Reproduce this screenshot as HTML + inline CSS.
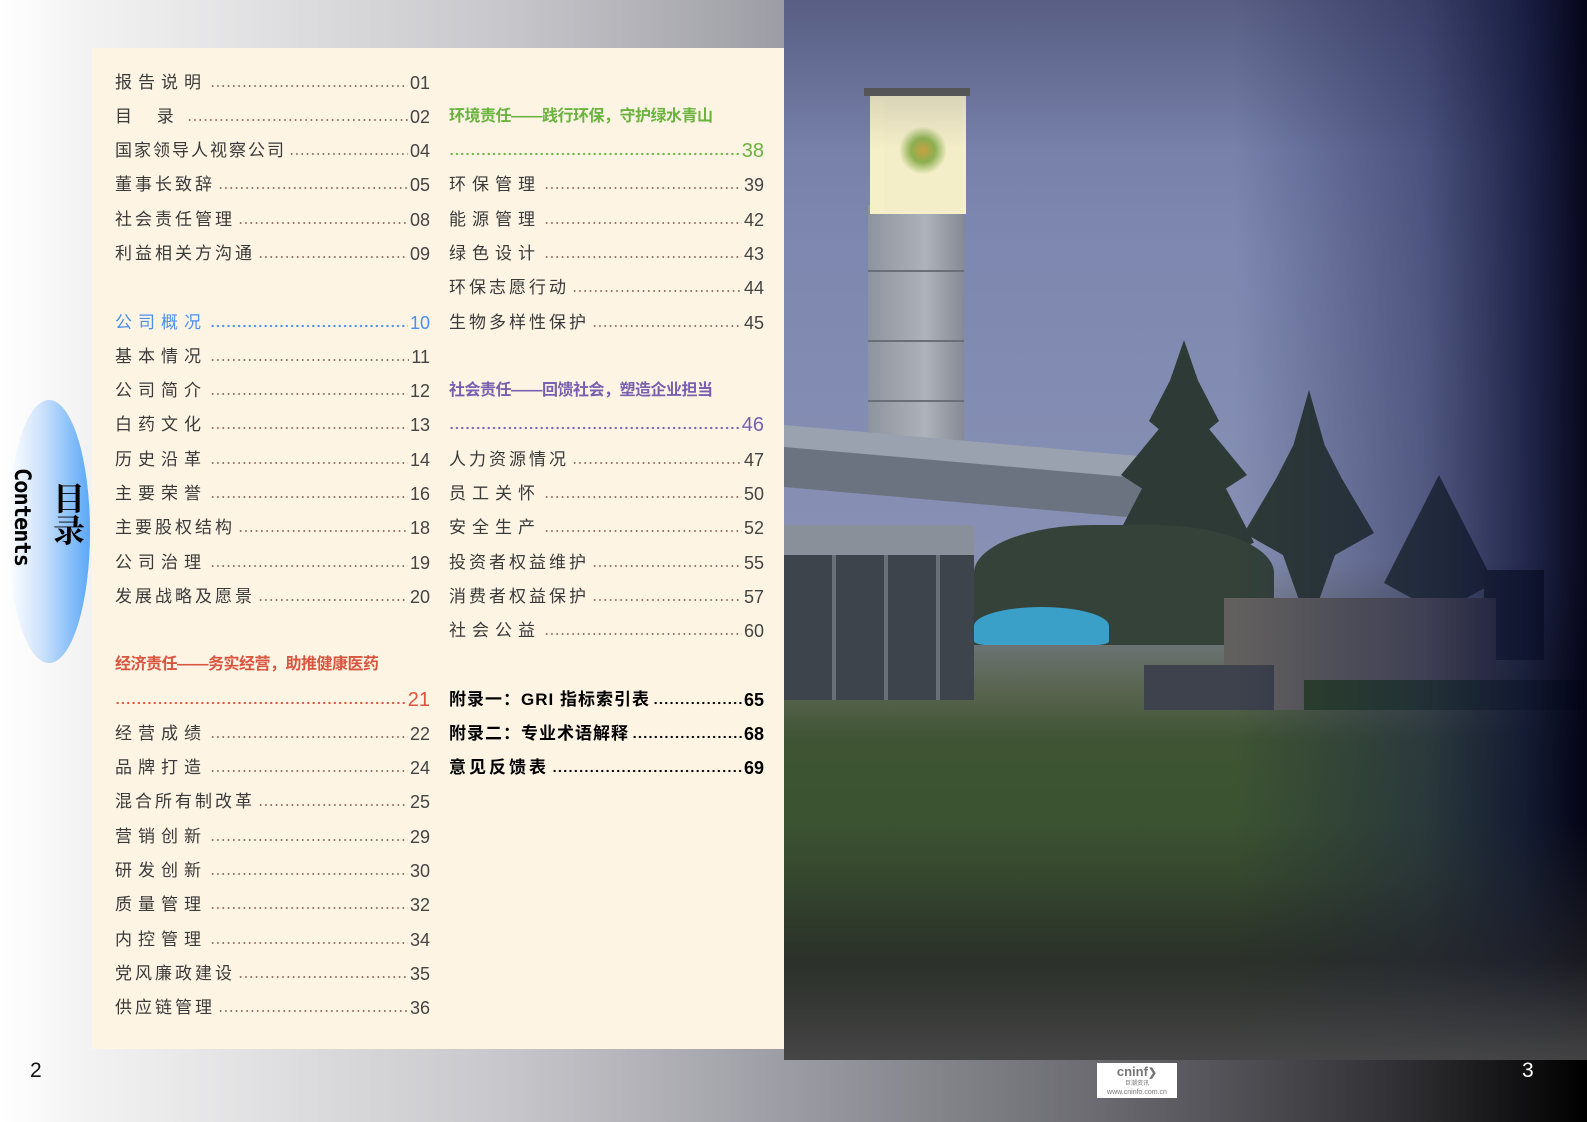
<!DOCTYPE html>
<html><head><meta charset="utf-8">
<style>
*{margin:0;padding:0;box-sizing:border-box}
body{width:1587px;height:1122px;position:relative;overflow:hidden;font-family:"Liberation Sans","Noto Sans CJK SC",sans-serif;
background:linear-gradient(90deg,#fff 0,#f2f2f2 90px,#c8c8cc 500px,#9a9aa2 800px,#6a6a70 1100px,#303034 1400px,#000 1587px);}
.photo{position:absolute;left:784px;top:0;width:803px;height:1060px;overflow:hidden;
background:linear-gradient(180deg,#6c76a0 0,#7e88b0 250px,#8890b4 560px,#5a6450 690px,#3e5433 740px,#3a5230 880px,#2a3628 1000px,#3a3a3a 1060px);}
.vig{position:absolute;inset:0;background:linear-gradient(90deg,rgba(0,0,0,0) 0,rgba(0,0,0,0) 450px,rgba(20,25,70,.45) 640px,rgba(10,14,50,.8) 740px,rgba(0,0,20,.95) 803px);}
.vig2{position:absolute;inset:0;background:linear-gradient(180deg,rgba(0,0,0,0) 0,rgba(0,0,0,0) 820px,rgba(40,40,40,.6) 960px,rgba(70,70,70,.95) 1060px);}
.vig3{position:absolute;inset:0;background:linear-gradient(180deg,rgba(60,60,90,.4) 0,rgba(0,0,0,0) 150px);}
.panel{position:absolute;left:92px;top:48px;width:692px;height:1001px;background:#fdf4e4}
.r{position:absolute;width:315px;height:22px;display:flex;align-items:flex-end;font-size:17px;color:#3a3a3a;line-height:22px;white-space:nowrap}
.r .l{letter-spacing:3px}
.r .d{flex:1;height:4px;margin:0 2px 6px 3px;background-image:radial-gradient(circle,#8a6a5a 0.8px,transparent 1.1px);background-size:5.3px 4px;background-repeat:repeat-x}
.r .n{font-size:18px;color:#444}
.w .l{letter-spacing:6px}
.blue,.blue .n{color:#4a8ef0}.blue .d{background-image:radial-gradient(circle,#4a8ef0 1px,transparent 1.3px)}
.red,.red .n{color:#d9553f}.red .d{background-image:radial-gradient(circle,#d9553f 1px,transparent 1.3px)}
.green,.green .n{color:#6ab33e}.green .d{background-image:radial-gradient(circle,#6ab33e 1px,transparent 1.3px)}
.purple,.purple .n{color:#7a5fb0}.purple .d{background-image:radial-gradient(circle,#7a5fb0 1px,transparent 1.3px)}
.h{font-weight:bold;font-size:16px;letter-spacing:-0.5px}
.b,.b .n{color:#000;font-weight:bold}.b .d{background-image:radial-gradient(circle,#000 1px,transparent 1.3px)}
.b .l{letter-spacing:1px}
.ell{position:absolute;left:8px;top:400px;width:82px;height:263px;border-radius:50%;background:linear-gradient(90deg,#fff 0,#cfe3fb 40%,#5aa8f8 100%)}
.tree{position:absolute;background:#2e3a36}
</style></head><body>
<div class="photo">
 <div style="position:absolute;left:84px;top:205px;width:96px;height:245px;background:linear-gradient(90deg,#8e949e,#aeb2ba 60%,#868a94)"></div>
 <div style="position:absolute;left:84px;top:270px;width:96px;height:2px;background:#6a6e76"></div>
 <div style="position:absolute;left:84px;top:340px;width:96px;height:2px;background:#6a6e76"></div>
 <div style="position:absolute;left:84px;top:400px;width:96px;height:2px;background:#6a6e76"></div>
 <div style="position:absolute;left:80px;top:88px;width:106px;height:8px;background:#5a5a58"></div>
 <div style="position:absolute;left:86px;top:96px;width:96px;height:118px;background:#f6f0c8"></div>
 <div style="position:absolute;left:100px;top:100px;width:78px;height:112px;background:radial-gradient(circle at 50% 45%,#c8a040 0,#8cb050 12px,#f4eec8 24px)"></div>
 <div style="position:absolute;left:0;top:425px;width:435px;height:22px;background:#9aa2b0;transform:skewY(5deg);transform-origin:left top"></div>
 <div style="position:absolute;left:0;top:447px;width:435px;height:40px;background:#6c7380;transform:skewY(5deg);transform-origin:left top"></div>
 <div class="tree" style="left:330px;top:340px;width:140px;height:270px;clip-path:polygon(50% 0,60% 15%,75% 30%,68% 33%,95% 50%,80% 55%,100% 75%,60% 85%,55% 100%,45% 100%,40% 85%,0 75%,20% 55%,5% 50%,32% 33%,25% 30%,40% 15%)"></div>
 <div class="tree" style="left:460px;top:390px;width:130px;height:220px;clip-path:polygon(50% 0,62% 25%,75% 40%,100% 65%,70% 75%,55% 100%,45% 100%,30% 75%,0 65%,25% 40%,38% 25%)"></div>
 <div class="tree" style="left:600px;top:475px;width:110px;height:135px;clip-path:polygon(50% 0,100% 80%,55% 100%,45% 100%,0 80%)"></div>
 <div style="position:absolute;left:190px;top:525px;width:300px;height:120px;background:#34423a;border-radius:40% 40% 0 0"></div>
 <div style="position:absolute;left:700px;top:570px;width:60px;height:90px;background:#2a3630"></div>
 <div style="position:absolute;left:0;top:525px;width:190px;height:30px;background:#8a909a"></div>
 <div style="position:absolute;left:0;top:555px;width:190px;height:145px;background:repeating-linear-gradient(90deg,#3e444c 0,#3e444c 48px,#6a7078 48px,#6a7078 52px)"></div>
 <div style="position:absolute;left:440px;top:598px;width:272px;height:112px;background:#62605e"></div>
 <div style="position:absolute;left:360px;top:665px;width:130px;height:45px;background:#3e424c"></div>
 <div style="position:absolute;left:520px;top:680px;width:280px;height:30px;background:#2e4428"></div>
 <div style="position:absolute;left:190px;top:607px;width:135px;height:38px;background:#3aa0c8;border-radius:50% 50% 10% 10%"></div>
 <div class="vig3"></div><div class="vig"></div><div class="vig2"></div>
</div>
<div class="panel"></div>
<div class="ell"></div>
<div style="position:absolute;left:46px;top:482px;font-size:32px;font-weight:bold;color:#000;line-height:46px;writing-mode:vertical-rl;font-family:'Noto Serif CJK SC','Noto Sans CJK SC',serif">目录</div>
<div style="position:absolute;left:9px;top:468px;font-size:22px;font-weight:bold;color:#000;writing-mode:vertical-rl;font-family:'DejaVu Sans Mono','Liberation Mono',monospace;letter-spacing:-1px">Contents</div>

<div class="r w" style="left:115px;top:72px"><span class="l">报告说明</span><span class="d"></span><span class="n">01</span></div>
<div class="r" style="left:115px;top:106px"><span class="l" style="letter-spacing:10px">目 录</span><span class="d"></span><span class="n">02</span></div>
<div class="r" style="left:115px;top:140px"><span class="l" style="letter-spacing:2px">国家领导人视察公司</span><span class="d"></span><span class="n">04</span></div>
<div class="r" style="left:115px;top:174px"><span class="l">董事长致辞</span><span class="d"></span><span class="n">05</span></div>
<div class="r" style="left:115px;top:209px"><span class="l">社会责任管理</span><span class="d"></span><span class="n">08</span></div>
<div class="r" style="left:115px;top:243px"><span class="l">利益相关方沟通</span><span class="d"></span><span class="n">09</span></div>
<div class="r w blue" style="left:115px;top:312px"><span class="l">公司概况</span><span class="d"></span><span class="n">10</span></div>
<div class="r w" style="left:115px;top:346px"><span class="l">基本情况</span><span class="d"></span><span class="n">11</span></div>
<div class="r w" style="left:115px;top:380px"><span class="l">公司简介</span><span class="d"></span><span class="n">12</span></div>
<div class="r w" style="left:115px;top:414px"><span class="l">白药文化</span><span class="d"></span><span class="n">13</span></div>
<div class="r w" style="left:115px;top:449px"><span class="l">历史沿革</span><span class="d"></span><span class="n">14</span></div>
<div class="r w" style="left:115px;top:483px"><span class="l">主要荣誉</span><span class="d"></span><span class="n">16</span></div>
<div class="r" style="left:115px;top:517px"><span class="l">主要股权结构</span><span class="d"></span><span class="n">18</span></div>
<div class="r w" style="left:115px;top:552px"><span class="l">公司治理</span><span class="d"></span><span class="n">19</span></div>
<div class="r" style="left:115px;top:586px"><span class="l">发展战略及愿景</span><span class="d"></span><span class="n">20</span></div>
<div class="r red" style="left:115px;top:654px"><span class="h">经济责任——务实经营，助推健康医药</span></div>
<div class="r red" style="left:115px;top:689px"><span class="d" style="margin-left:0"></span><span class="n" style="font-size:20px">21</span></div>
<div class="r w" style="left:115px;top:723px"><span class="l">经营成绩</span><span class="d"></span><span class="n">22</span></div>
<div class="r w" style="left:115px;top:757px"><span class="l">品牌打造</span><span class="d"></span><span class="n">24</span></div>
<div class="r" style="left:115px;top:791px"><span class="l">混合所有制改革</span><span class="d"></span><span class="n">25</span></div>
<div class="r w" style="left:115px;top:826px"><span class="l">营销创新</span><span class="d"></span><span class="n">29</span></div>
<div class="r w" style="left:115px;top:860px"><span class="l">研发创新</span><span class="d"></span><span class="n">30</span></div>
<div class="r w" style="left:115px;top:894px"><span class="l">质量管理</span><span class="d"></span><span class="n">32</span></div>
<div class="r w" style="left:115px;top:929px"><span class="l">内控管理</span><span class="d"></span><span class="n">34</span></div>
<div class="r" style="left:115px;top:963px"><span class="l">党风廉政建设</span><span class="d"></span><span class="n">35</span></div>
<div class="r" style="left:115px;top:997px"><span class="l">供应链管理</span><span class="d"></span><span class="n">36</span></div>

<div class="r green" style="left:449px;top:106px"><span class="h">环境责任——践行环保，守护绿水青山</span></div>
<div class="r green" style="left:449px;top:140px"><span class="d" style="margin-left:0"></span><span class="n" style="font-size:20px">38</span></div>
<div class="r w" style="left:449px;top:174px"><span class="l">环保管理</span><span class="d"></span><span class="n">39</span></div>
<div class="r w" style="left:449px;top:209px"><span class="l">能源管理</span><span class="d"></span><span class="n">42</span></div>
<div class="r w" style="left:449px;top:243px"><span class="l">绿色设计</span><span class="d"></span><span class="n">43</span></div>
<div class="r" style="left:449px;top:277px"><span class="l">环保志愿行动</span><span class="d"></span><span class="n">44</span></div>
<div class="r" style="left:449px;top:312px"><span class="l">生物多样性保护</span><span class="d"></span><span class="n">45</span></div>
<div class="r purple" style="left:449px;top:380px"><span class="h">社会责任——回馈社会，塑造企业担当</span></div>
<div class="r purple" style="left:449px;top:414px"><span class="d" style="margin-left:0"></span><span class="n" style="font-size:20px">46</span></div>
<div class="r" style="left:449px;top:449px"><span class="l">人力资源情况</span><span class="d"></span><span class="n">47</span></div>
<div class="r w" style="left:449px;top:483px"><span class="l">员工关怀</span><span class="d"></span><span class="n">50</span></div>
<div class="r w" style="left:449px;top:517px"><span class="l">安全生产</span><span class="d"></span><span class="n">52</span></div>
<div class="r" style="left:449px;top:552px"><span class="l">投资者权益维护</span><span class="d"></span><span class="n">55</span></div>
<div class="r" style="left:449px;top:586px"><span class="l">消费者权益保护</span><span class="d"></span><span class="n">57</span></div>
<div class="r w" style="left:449px;top:620px"><span class="l">社会公益</span><span class="d"></span><span class="n">60</span></div>
<div class="r b" style="left:449px;top:689px"><span class="l">附录一：GRI 指标索引表</span><span class="d"></span><span class="n">65</span></div>
<div class="r b" style="left:449px;top:723px"><span class="l">附录二：专业术语解释</span><span class="d"></span><span class="n">68</span></div>
<div class="r b" style="left:449px;top:757px"><span class="l" style="letter-spacing:3px">意见反馈表</span><span class="d"></span><span class="n">69</span></div>

<div style="position:absolute;left:30px;top:1059px;font-size:21px;color:#111">2</div>
<div style="position:absolute;left:1522px;top:1059px;font-size:21px;color:#fff">3</div>
<div style="position:absolute;left:1097px;top:1063px;width:80px;height:35px;background:#fff;text-align:center;font-family:'Liberation Sans',sans-serif">
 <div style="font-size:13px;font-weight:bold;color:#777;line-height:14px;margin-top:2px">cninf<span style="font-size:11px">❯</span></div>
 <div style="font-size:6px;color:#777;line-height:8px">巨潮资讯</div>
 <div style="font-size:7px;color:#777;line-height:9px">www.cninfo.com.cn</div>
</div>
</body></html>
